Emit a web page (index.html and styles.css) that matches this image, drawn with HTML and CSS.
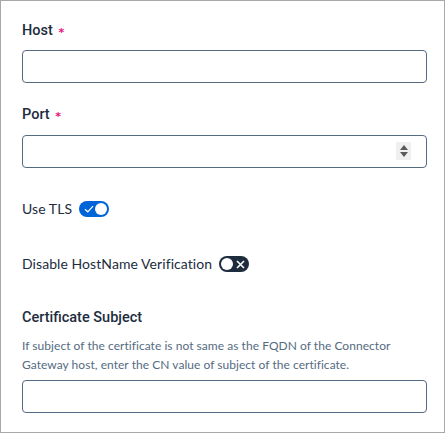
FILE: index.html
```html
<!DOCTYPE html>
<html>
<head>
<meta charset="utf-8">
<link rel="stylesheet" href="styles.css">
</head>
<body>
<div class="panel">
  <div class="field">
    <label class="label">Host <span class="req">*</span></label>
    <div class="input"></div>
  </div>
  <div class="field field-port">
    <label class="label">Port <span class="req">*</span></label>
    <div class="input input-number">
      <span class="spin"><span class="up"></span><span class="down"></span></span>
    </div>
  </div>
  <div class="switch-row row-tls">
    <span class="switch-text">Use TLS</span>
    <span class="switch on">
      <svg class="icon-check" width="10" height="8" viewBox="0 0 10 8"><path d="M1 4.2 L3.8 6.8 L9 1.2" fill="none" stroke="#fff" stroke-width="1.2"/></svg>
      <span class="knob"></span>
    </span>
  </div>
  <div class="switch-row row-host">
    <span class="switch-text">Disable HostName Verification</span>
    <span class="switch off">
      <span class="knob"></span>
      <svg class="icon-x" width="9" height="9" viewBox="0 0 9 9"><path d="M1 1 L8 8 M8 1 L1 8" fill="none" stroke="#fff" stroke-width="1.6"/></svg>
    </span>
  </div>
  <div class="field field-cert">
    <label class="label">Certificate Subject</label>
    <p class="help">If subject of the certificate is not same as the FQDN of the Connector Gateway host, enter the CN value of subject of the certificate.</p>
    <div class="input"></div>
  </div>
</div>
</body>
</html>
```

FILE: styles.css
```css
* { box-sizing: border-box; }
html, body { margin: 0; padding: 0; background: #fff; }
body {
  font-family: Lato, "Liberation Sans", sans-serif;
  color: #1d2d3e;
}
.panel {
  width: 445px;
  height: 433px;
  border: 1px solid #a8a8a8;
  padding: 20px 17px 0 21px;
}
.field { display: flex; flex-direction: column; }
.label {
  display: block;
  height: 20px;
  font-family: Roboto, Lato, sans-serif;
  font-size: 14.5px;
  font-weight: 500;
  line-height: 20px;
  margin-bottom: 9px;
  color: #1d2d3e;
}
.req {
  font-family: "DejaVu Sans", sans-serif;
  font-weight: bold;
  color: #e0147a;
  font-size: 11px;
  line-height: 0;
  margin-left: 2px;
  vertical-align: -1px;
}
.input {
  height: 33px;
  width: 405px;
  border: 1px solid #556b82;
  border-radius: 4px;
  background: #fff;
  position: relative;
}
.field-port { margin-top: 22px; }
.field-port .label { margin-bottom: 10px; }
.spin {
  position: absolute;
  right: 15px;
  top: 6px;
  width: 15px;
  height: 18px;
  background: #efefef;
  display: flex;
  flex-direction: column;
  align-items: center;
  justify-content: center;
  gap: 2px;
}
.up, .down { width: 0; height: 0; border-left: 4px solid transparent; border-right: 4px solid transparent; }
.up { border-bottom: 5px solid #5a5a5a; }
.down { border-top: 5px solid #5a5a5a; }
.switch-row {
  display: flex;
  align-items: center;
  gap: 7px;
  height: 20px;
}
.row-tls { margin-top: 31px; }
.row-host { margin-top: 35px; }
.switch-text { font-size: 14px; line-height: 20px; letter-spacing: 0.07px; }
.switch {
  width: 30px;
  height: 16px;
  border-radius: 8px;
  display: flex;
  align-items: center;
  padding: 0 2px;
  justify-content: space-between;
}
.switch.on { background: #0064d9; padding-left: 5px; }
.switch.off { background: #1d2d3e; padding-right: 4px; }
.knob { width: 12px; height: 12px; border-radius: 50%; background: #fff; }
.field-cert { margin-top: 34px; }
.field-cert .label { margin-bottom: 8px; }
.help {
  margin: 0 0 6px;
  font-size: 12px;
  line-height: 19px;
  letter-spacing: 0.04px;
  color: #556b82;
}
```
